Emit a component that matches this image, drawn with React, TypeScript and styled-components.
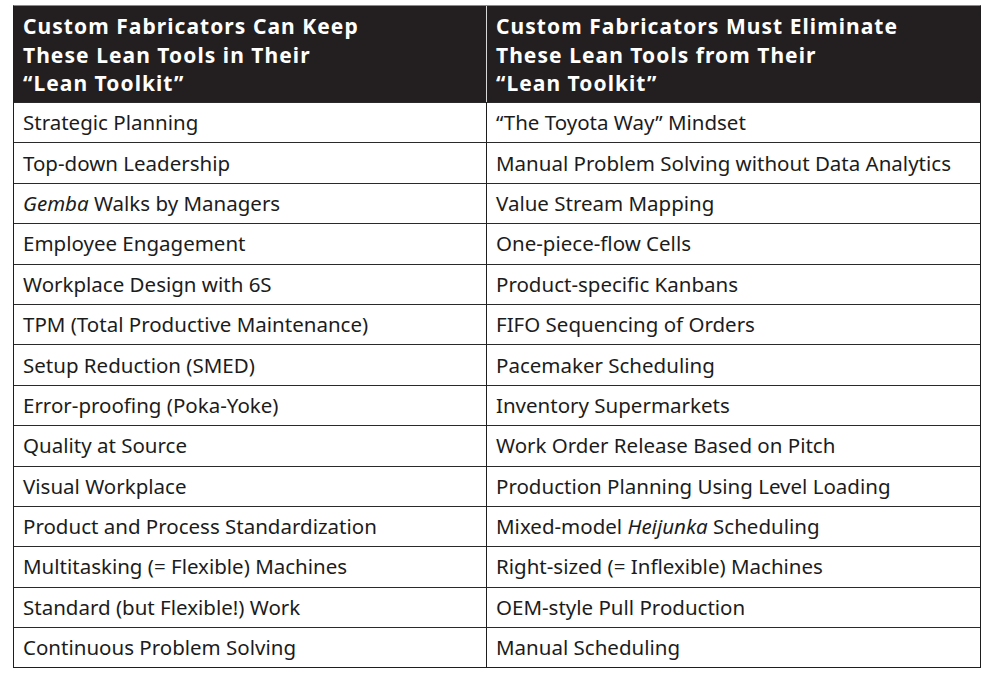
import React from 'react';
import { createGlobalStyle, styled } from 'styled-components';

type Cell = React.ReactNode;

const rows: [Cell, Cell][] = [
  ['Strategic Planning', '\u201CThe Toyota Way\u201D Mindset'],
  ['Top-down Leadership', 'Manual Problem Solving without Data Analytics'],
  [<><em>Gemba</em> Walks by Managers</>, 'Value Stream Mapping'],
  ['Employee Engagement', 'One-piece-flow Cells'],
  ['Workplace Design with 6S', 'Product-specific Kanbans'],
  ['TPM (Total Productive Maintenance)', 'FIFO Sequencing of Orders'],
  ['Setup Reduction (SMED)', 'Pacemaker Scheduling'],
  ['Error-proofing (Poka-Yoke)', 'Inventory Supermarkets'],
  ['Quality at Source', 'Work Order Release Based on Pitch'],
  ['Visual Workplace', 'Production Planning Using Level Loading'],
  ['Product and Process Standardization', <>Mixed-model <em>Heijunka</em> Scheduling</>],
  ['Multitasking (= Flexible) Machines', 'Right-sized (= Inflexible) Machines'],
  ['Standard (but Flexible!) Work', 'OEM-style Pull Production'],
  ['Continuous Problem Solving', 'Manual Scheduling'],
];

const GlobalStyle = createGlobalStyle`
  body {
    margin: 0;
    background: #ffffff;
    font-family: "Noto Sans", "Open Sans", sans-serif;
  }
`;

const Page = styled.div`
  padding: 5px 19px 0 13px;
`;

const Table = styled.div`
  display: grid;
  grid-template-columns: 472px 1fr;
  border: 1px solid #1e1e1e;
  border-top-color: #8a8a8a;
`;

const HeadCell = styled.div<{ $last?: boolean }>`
  background: #231f20;
  color: #ffffff;
  height: 96px;
  box-sizing: border-box;
  padding: 6px 8px 0 9px;
  border-left: ${({ $last }) => ($last ? '1px solid #d8d8d8' : 'none')};
`;

const HeadLine = styled.div`
  font-weight: 700;
  font-size: 21px;
  letter-spacing: 1.05px;
  line-height: 28.6px;
  white-space: nowrap;
`;

const BodyCell = styled.div<{ $last?: boolean }>`
  color: #1c1c1c;
  font-size: 20.5px;
  height: 40.4px;
  box-sizing: border-box;
  display: flex;
  align-items: center;
  padding: 0 0 1px 9px;
  border-top: 1px solid #2a2a2a;
  border-left: ${({ $last }) => ($last ? '1px solid #1e1e1e' : 'none')};
  white-space: nowrap;
`;

const Header = ({ lines, last }: { lines: string[]; last?: boolean }) => (
  <HeadCell $last={last}>
    {lines.map((line) => (
      <HeadLine key={line}>{line}</HeadLine>
    ))}
  </HeadCell>
);

const App = () => (
  <>
    <GlobalStyle />
    <Page>
      <Table>
        <Header
          lines={[
            'Custom Fabricators Can Keep',
            'These Lean Tools in Their',
            '\u201CLean Toolkit\u201D',
          ]}
        />
        <Header
          last
          lines={[
            'Custom Fabricators Must Eliminate',
            'These Lean Tools from Their',
            '\u201CLean Toolkit\u201D',
          ]}
        />
        {rows.map(([left, right], i) => (
          <React.Fragment key={i}>
            <BodyCell>
              <span>{left}</span>
            </BodyCell>
            <BodyCell $last>
              <span>{right}</span>
            </BodyCell>
          </React.Fragment>
        ))}
      </Table>
    </Page>
  </>
);

export default App;
